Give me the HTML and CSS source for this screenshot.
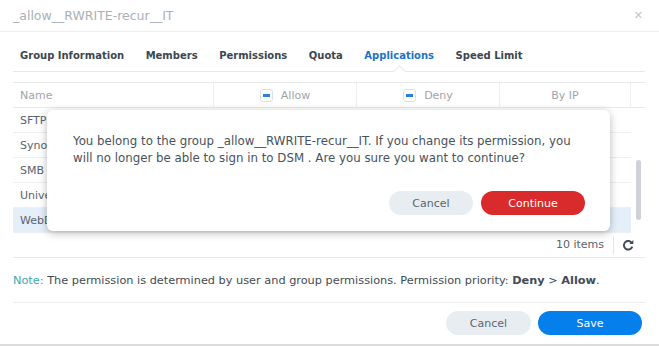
FILE: index.html
```html
<html lang="en">
<head>
    <meta charset="UTF-8">
    <title>_allow__RWRITE-recur__IT</title>
    <link rel="stylesheet" href="styles.css">
</head>
<body>
    <div class="window">
        <div class="header">
            <span class="header-title">_allow__RWRITE-recur__IT</span>
            <span class="close">&#x2715;</span>
        </div>
        <div class="tabs">
            <span class="tab">Group Information</span>
            <span class="tab">Members</span>
            <span class="tab">Permissions</span>
            <span class="tab">Quota</span>
            <span class="tab active">Applications</span>
            <span class="tab">Speed Limit</span>
        </div>
        <div class="grid">
            <div class="grid-head">
                <div class="cell name">Name</div>
                <div class="cell center"><span class="check"></span>Allow</div>
                <div class="cell center"><span class="check"></span>Deny</div>
                <div class="cell center">By IP</div>
                <div class="cell scroll-col"></div>
            </div>
            <div class="grid-body">
                <div class="rows">
                    <div class="row"><div class="cell name">SFTP</div><div class="cell"></div><div class="cell"></div><div class="cell"></div></div>
                    <div class="row"><div class="cell name">Synology Drive</div><div class="cell"></div><div class="cell"></div><div class="cell"></div></div>
                    <div class="row"><div class="cell name">SMB</div><div class="cell"></div><div class="cell"></div><div class="cell"></div></div>
                    <div class="row"><div class="cell name">Universal Search</div><div class="cell"></div><div class="cell"></div><div class="cell"></div></div>
                    <div class="row selected"><div class="cell name">WebDAV</div><div class="cell"></div><div class="cell"></div><div class="cell"></div></div>
                </div>
                <div class="scrollbar"><div class="thumb"></div></div>
            </div>
            <div class="grid-foot">
                <span class="count">10 items</span>
                <span class="refresh">
                    <svg width="12" height="12" viewBox="0 0 12 12"><path d="M10 4.2A4.3 4.3 0 1 0 10.3 7.6" fill="none" stroke="#3f4a55" stroke-width="1.9"/><path d="M11.3 1.1V5.1H7.3Z" fill="#3f4a55"/></svg>
                </span>
            </div>
        </div>
        <p class="note"><span class="note-label">Note:</span> The permission is determined by user and group permissions. Permission priority: <b>Deny</b> &gt; <b>Allow</b>.</p>
        <div class="footer">
            <button type="button" class="btn btn-grey">Cancel</button>
            <button type="button" class="btn btn-blue">Save</button>
        </div>

        <div class="modal">
            <p class="modal-text">You belong to the group _allow__RWRITE-recur__IT. If you change its permission, you will no longer be able to sign in to DSM . Are you sure you want to continue?</p>
            <div class="modal-buttons">
                <button type="button" class="btn btn-grey small">Cancel</button>
                <button type="button" class="btn btn-red">Continue</button>
            </div>
        </div>
    </div>
</body>
</html>
```

FILE: styles.css
```css
*{
    box-sizing: border-box;
    /* DSM-ish palette */
    --color-text:#414b55;
    --color-faded:#9ea4aa;
    --color-line:#e6e8ea;
    --color-blue:#057feb;
    --color-red:#d92b2b;
    --color-grey-btn:#e8edf2;
}
body{
    margin: 0;
    background-color: #fff;
    font-family: "DejaVu Sans", Verdana, sans-serif;
    font-size: 11px;
    color: var(--color-text);
}
.window{
    position: relative;
    width: 659px;
    height: 346px;
    border-bottom: 2px solid #dcdcdc;
    overflow: hidden;
}
.header{
    height: 32px;
    padding: 0 16px 0 13px;
    display: flex;
    align-items: center;
    justify-content: space-between;
    border-bottom: 1px solid #eceeef;
}
.header-title{
    color: #aab0b5;
    font-size: 12.5px;
}
.close{
    color: #c2c6ca;
    font-size: 11px;
}
.tabs{
    margin: 0 14px 0 13px;
    height: 40px;
    padding: 18px 0 0 7px;
    display: flex;
    gap: 21.5px;
    border-bottom: 1px solid var(--color-line);
}
.tab{
    font-weight: bold;
    font-size: 10px;
    color: #3c4650;
    position: relative;
    height: 21px;
}
.tab.active{
    color: #1b73c7;
    &::after{
        content: "";
        position: absolute;
        left: 50%;
        bottom: -5px;
        width: 8px;
        height: 8px;
        margin-left: -4px;
        background: #fff;
        border-left: 1px solid var(--color-line);
        border-top: 1px solid var(--color-line);
        transform: rotate(45deg);
    }
}
.grid{
    margin: 10px 14px 0 13px;
    border-top: 1px solid var(--color-line);
}
.grid-head, .row{
    display: grid;
    grid-template-columns: 201px 143px 143px 131px 14px;
    height: 25px;
}
.row{
    grid-template-columns: 201px 143px 143px 131px;
    border-bottom: 1px solid #eef0f1;
}
.grid-head{
    border-bottom: 1px solid var(--color-line);
    color: var(--color-faded);
    & .cell{
        border-right: 1px solid #eceeef;
    }
    & .scroll-col{
        border-right: none;
    }
}
.cell{
    display: flex;
    align-items: center;
    padding-left: 7px;
    white-space: nowrap;
    overflow: hidden;
}
.center{
    justify-content: center;
    padding-left: 0;
}
.check{
    display: inline-block;
    width: 13px;
    height: 13px;
    margin-right: 8px;
    border: 1px solid #d3e2f1;
    border-radius: 3px;
    background: #fff;
    position: relative;
    &::after{
        content: "";
        position: absolute;
        left: 2px;
        right: 2px;
        top: 4px;
        height: 3px;
        background: #2a82d6;
    }
}
.grid-body{
    display: flex;
}
.rows{
    width: 618px;
}
.row .name{
    color: #59636d;
}
.row.selected{
    background: #e4effa;
}
.scrollbar{
    width: 14px;
    padding: 52px 4px 0 5px;
    & .thumb{
        height: 60px;
        border-radius: 3px;
        background: #cfd3d7;
    }
}
.grid-foot{
    height: 25px;
    display: flex;
    justify-content: flex-end;
    align-items: center;
    border-bottom: 1px solid var(--color-line);
    color: #59636d;
}
.count{
    padding-right: 9px;
    border-right: 1px solid #e3e5e7;
    line-height: 18px;
}
.refresh{
    width: 31px;
    padding-right: 3px;
    display: flex;
    justify-content: center;
}
.note{
    margin: 0 13px;
    height: 45px;
    line-height: 45px;
    font-size: 11.3px;
    border-bottom: 1px solid #eceeef;
    white-space: nowrap;
    & b{
        font-weight: bold;
    }
}
.note-label{
    color: #3aa7b3;
}
.footer{
    display: flex;
    justify-content: flex-end;
    gap: 7px;
    padding: 8px 17px 0 0;
}
.btn{
    font-family: "DejaVu Sans", Verdana, sans-serif;
    font-size: 11px;
    height: 24px;
    border: none;
    border-radius: 12px;
    padding: 0;
}
.btn-grey{
    width: 85px;
    background-color: var(--color-grey-btn);
    color: #5b6570;
}
.btn-blue{
    width: 104px;
    background-color: var(--color-blue);
    color: #fff;
}
.btn-red{
    width: 104px;
    background-color: var(--color-red);
    color: #fff;
}
.small{
    width: 84px;
}
.modal{
    position: absolute;
    left: 47px;
    top: 110px;
    width: 563px;
    height: 121px;
    background: #fff;
    border-radius: 6px;
    box-shadow: 0 2px 9px rgba(0,0,0,.28);
    padding: 23px 25px 0 26px;
}
.modal-text{
    margin: 0;
    line-height: 17px;
    font-size: 11.8px;
    color: #48525c;
}
.modal-buttons{
    display: flex;
    justify-content: flex-end;
    gap: 8px;
    margin-top: 24px;
}
```
